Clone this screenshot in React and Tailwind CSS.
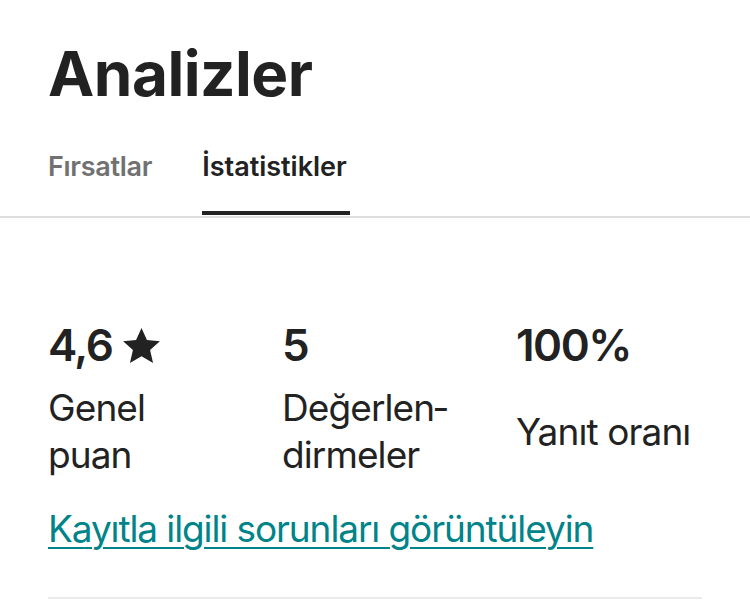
import React from 'react';

const Star = () => (
    <svg viewBox="1.5 1.6 21 20" className="w-[37px] h-[35px] fill-[#222222]" aria-hidden="true">
        <path d="M12 1.6l3.1 6.9 7.4.7-5.6 5 1.7 7.4L12 17.7l-6.6 3.9 1.7-7.4-5.6-5 7.4-.7z" />
    </svg>
);

const stats = [
    { value: '4,6', star: true, label: <>Genel puan</> },
    { value: '5', label: <>Değerlen&shy;dirmeler</> },
    { value: '100%', label: <>Yanıt oranı</> },
];

const App = () => {
    return (
        <div className="min-h-screen bg-white text-[#222222] font-['Inter','Noto_Sans',sans-serif]">
            {/* Header + tabs */}
            <div className="px-12 pt-[36px]">
                <h1 className="text-[62px] leading-[75px] font-bold tracking-[-0.5px]">Analizler</h1>
                <div className="flex gap-[50px] mt-[39px]">
                    <button className="text-[27px] leading-[33px] font-semibold tracking-[-0.3px] text-[#717171] pb-[28px] border-b-4 border-transparent">
                        Fırsatlar
                    </button>
                    <button className="text-[27px] leading-[33px] font-semibold text-[#222222] pr-[3px] pb-[28px] border-b-4 border-[#222222]">
                        İstatistikler
                    </button>
                </div>
            </div>
            <div className="h-[2px] bg-[#dddddd] mt-px" />

            {/* Stats */}
            <div className="px-12 pt-[101px]">
                <div className="grid grid-cols-3 gap-12">
                    {stats.map(({ value, star, label }) => (
                        <div key={value} className="flex flex-col">
                            <div className="flex items-center gap-[11px] h-[53px]">
                                <span className="text-[44px] leading-[53px] font-semibold tracking-[-1.5px]">{value}</span>
                                {star && <Star />}
                            </div>
                            <div className="mt-[12px] h-[94px] flex items-center">
                                <p className="text-[37px] leading-[47px] tracking-[-0.9px]">{label}</p>
                            </div>
                        </div>
                    ))}
                </div>

                <a href="#" className="block mt-[27px] text-[37px] leading-[47px] tracking-[-1.1px] text-[#008489] underline decoration-2 underline-offset-[5px] w-fit">
                    Kayıtla ilgili sorunları görüntüleyin
                </a>

                <div className="h-[2px] bg-[#ebebeb] mt-[45px]" />
            </div>
        </div>
    );
};

export default App;
